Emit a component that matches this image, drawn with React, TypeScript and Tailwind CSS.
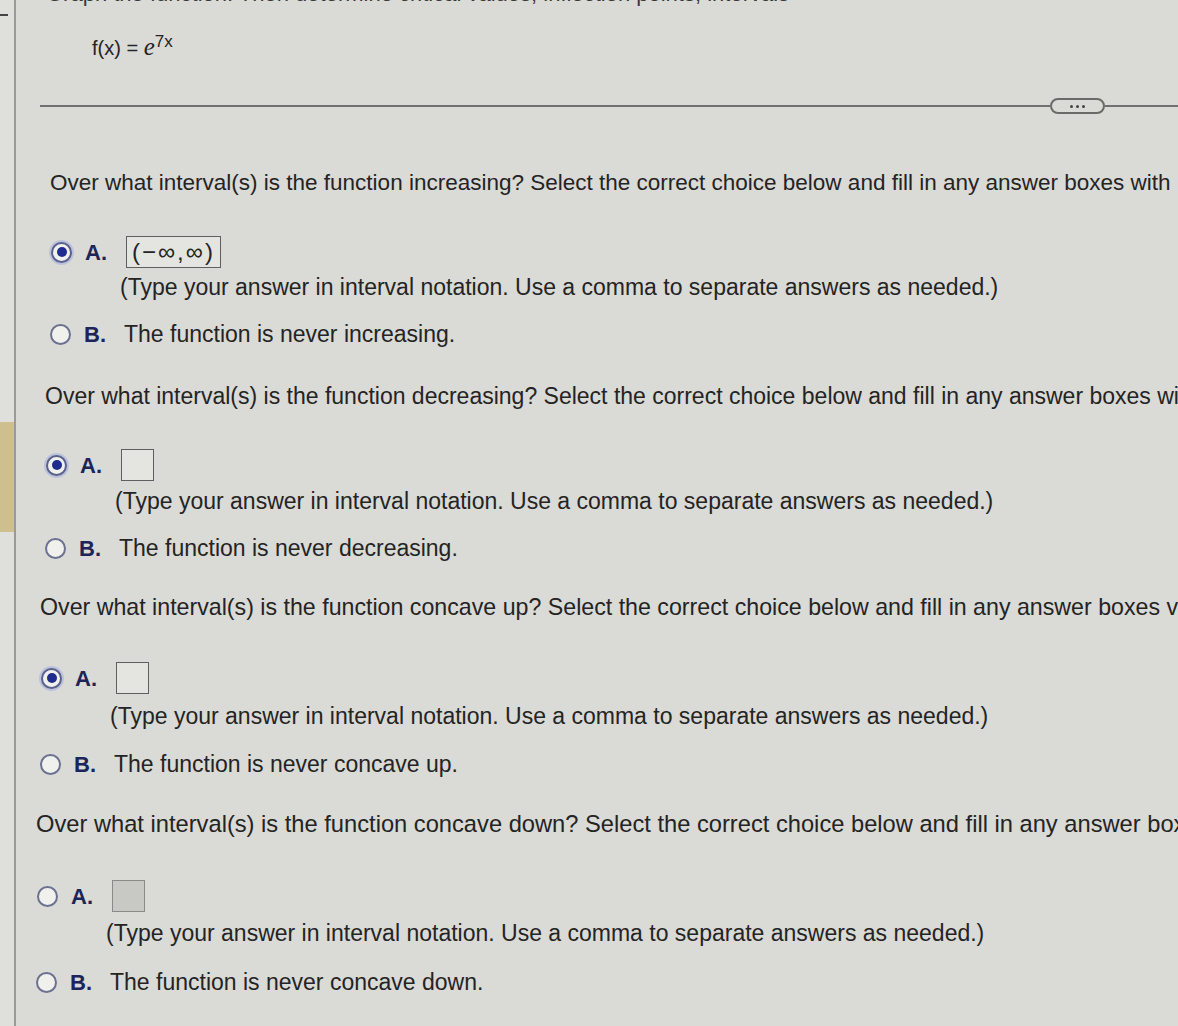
import React from "react";

function Radio({ checked }: { checked?: boolean }) {
  return (
    <span
      className={`flex h-[21px] w-[21px] shrink-0 items-center justify-center rounded-full border-2 ${
        checked ? "border-[#59618c] shadow-[0_0_0_2px_#bcc2dc]" : "border-[#6c7190]"
      } bg-[#f0f0ed]`}
    >
      {checked && <span className="h-[10px] w-[10px] rounded-full bg-[#1f2b8f]" />}
    </span>
  );
}

function AnswerBox({ value, filled }: { value?: string; filled?: boolean }) {
  return (
    <span
      className={`flex h-[32px] min-w-[33px] items-center border-[1.5px] px-[5px] text-[24px] leading-none tracking-[2px] ${
        filled ? "border-[#8a8a88] bg-[#c8c8c5]" : "border-[#5f5f5f] bg-[#e4e4e0]"
      }`}
    >
      {value}
    </span>
  );
}

type Section = {
  question: string;
  never: string;
  answer?: string;
  checked: boolean;
  filled?: boolean;
  // spacing differs a bit per block (photo perspective)
  wrap: string;
  qSize: string;
  aGap: string;
  tGap: string;
  bGap: string;
};

const sections: Section[] = [
  {
    question:
      "Over what interval(s) is the function increasing? Select the correct choice below and fill in any answer boxes with",
    never: "The function is never increasing.",
    answer: "(\u2212\u221e,\u221e)",
    checked: true,
    wrap: "pl-[34px]",
    qSize: "text-[22.5px]",
    aGap: "mt-[39px]",
    tGap: "mt-[5px]",
    bGap: "mt-[21px]",
  },
  {
    question:
      "Over what interval(s) is the function decreasing? Select the correct choice below and fill in any answer boxes wi",
    never: "The function is never decreasing.",
    checked: true,
    wrap: "pl-[29px] mt-[36px]",
    qSize: "text-[23px]",
    aGap: "mt-[39px]",
    tGap: "mt-[6px]",
    bGap: "mt-[21px]",
  },
  {
    question:
      "Over what interval(s) is the function concave up? Select the correct choice below and fill in any answer boxes v",
    never: "The function is never concave up.",
    checked: true,
    wrap: "pl-[24px] mt-[33px]",
    qSize: "text-[23.2px]",
    aGap: "mt-[41px]",
    tGap: "mt-[8px]",
    bGap: "mt-[22px]",
  },
  {
    question:
      "Over what interval(s) is the function concave down? Select the correct choice below and fill in any answer boxes",
    never: "The function is never concave down.",
    checked: false,
    filled: true,
    wrap: "pl-[20px] mt-[34px]",
    qSize: "text-[23.7px]",
    aGap: "mt-[42px]",
    tGap: "mt-[7px]",
    bGap: "mt-[23px]",
  },
];

function QuestionBlock({ s }: { s: Section }) {
  return (
    <div className={`flex flex-col ${s.wrap}`}>
      <p className={`h-[28px] whitespace-nowrap leading-[28px] text-[#242424] ${s.qSize}`}>{s.question}</p>

      <div className={`flex h-[32px] items-center pl-[1px] ${s.aGap}`}>
        <Radio checked={s.checked} />
        <span className="ml-[13px] w-[41px] text-[22px] font-bold text-[#1c2458]">A.</span>
        <AnswerBox value={s.answer} filled={s.filled} />
      </div>
      <p className={`h-[28px] whitespace-nowrap pl-[70px] text-[23px] leading-[28px] text-[#242424] ${s.tGap}`}>
        (Type your answer in interval notation. Use a comma to separate answers as needed.)
      </p>

      <div className={`flex h-[24px] items-center ${s.bGap}`}>
        <Radio />
        <span className="ml-[13px] w-[40px] text-[22px] font-bold text-[#1c2458]">B.</span>
        <span className="whitespace-nowrap text-[23px] text-[#242424]">{s.never}</span>
      </div>
    </div>
  );
}

export default function App() {
  return (
    <div
      className="flex h-[1026px] w-[1178px] overflow-hidden bg-[#dadad6] text-[#242424]"
      style={{ fontFamily: '"Liberation Sans", Arial, sans-serif' }}
    >
      {/* left gutter */}
      <div className="flex w-[16px] shrink-0 flex-col border-r-2 border-[#9a9a97] bg-[#dfdfdb]">
        <div className="mt-[14px] h-[2px] w-[8px] bg-[#444]" />
        <div className="mt-[406px] h-[110px] w-full bg-[#cdbf8e]" />
      </div>

      <div className="flex min-w-0 flex-1 flex-col overflow-hidden">
        <div className="flex h-[7px] items-end overflow-hidden pl-[30px]">
          <p className="whitespace-nowrap text-[22px] leading-[26px] text-[#3a3a3a]">
            Graph the function. Then determine critical values, inflection points, intervals
          </p>
        </div>

        <p className="mt-[25px] h-[30px] pl-[76px] text-[20px] leading-[30px] text-[#242424]">
          f(x) = <span className="font-['Liberation_Serif'] text-[25px] italic">e</span>
          <sup className="text-[17px]">7x</sup>
        </p>

        <div className="mt-[36px] flex items-center pl-[24px]">
          <div className="h-[2px] flex-1 bg-[#707070]" />
          <div className="flex h-[16px] w-[55px] items-center justify-center gap-[3px] rounded-full border-2 border-[#6a6a68]">
            <span className="h-[3px] w-[3px] rounded-full bg-[#444]" />
            <span className="h-[3px] w-[3px] rounded-full bg-[#444]" />
            <span className="h-[3px] w-[3px] rounded-full bg-[#444]" />
          </div>
          <div className="h-[2px] w-[73px] bg-[#707070]" />
        </div>

        <div className="mt-[55px] flex flex-col">
          {sections.map((s, i) => (
            <QuestionBlock key={i} s={s} />
          ))}
        </div>
      </div>
    </div>
  );
}
